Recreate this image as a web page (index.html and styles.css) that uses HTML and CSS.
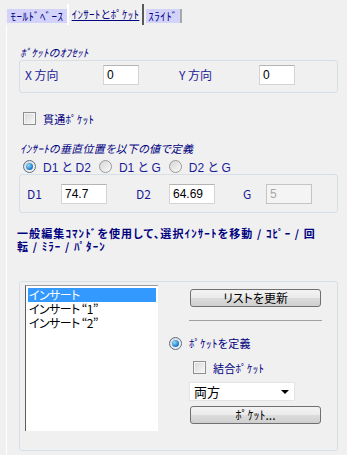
FILE: index.html
```html
<!DOCTYPE html>
<html lang="ja">
<head>
    <meta charset="UTF-8">
    <meta name="viewport" content="width=device-width, initial-scale=1.0">
    <title>インサートとポケット</title>
    <link rel="stylesheet" href="styles.css">
</head>
<body>
    <div class="tabs">
        <div class="tab tab-first">ﾓｰﾙﾄﾞﾍﾞｰｽ</div>
        <div class="tab tab-active">ｲﾝｻｰﾄとﾎﾟｹｯﾄ</div>
        <div class="tab tab-last">ｽﾗｲﾄﾞ</div>
    </div>

    <div class="panel">
        <div class="legend">ﾎﾟｹｯﾄのｵﾌｾｯﾄ</div>
        <div class="group offset-group">
            <span class="field-label offset-label">X 方向</span>
            <span class="textbox offset-box">0</span>
            <span class="field-label offset-label offset-y">Y 方向</span>
            <span class="textbox offset-box">0</span>
        </div>

        <div class="check-row through-row">
            <span class="checkbox"></span>
            <span class="check-text">貫通ﾎﾟｹｯﾄ</span>
        </div>

        <div class="legend legend-vertical">ｲﾝｻｰﾄの垂直位置を以下の値で定義</div>
        <div class="radio-row">
            <span class="radio checked"></span>
            <span class="radio-text">D1 と D2</span>
            <span class="radio"></span>
            <span class="radio-text">D1 と G</span>
            <span class="radio"></span>
            <span class="radio-text">D2 と G</span>
        </div>
        <div class="group dim-group">
            <span class="field-label dim-d1">D1</span>
            <span class="textbox dim-box">74.7</span>
            <span class="field-label dim-d2">D2</span>
            <span class="textbox dim-box">64.69</span>
            <span class="field-label dim-g">G</span>
            <span class="textbox dim-box disabled">5</span>
        </div>

        <div class="note">
            <div class="note-line">一般編集ｺﾏﾝﾄﾞを使用して、選択ｲﾝｻｰﾄを移動 / ｺﾋﾟｰ / 回</div>
            <div class="note-line">転 / ﾐﾗｰ / ﾊﾟﾀｰﾝ</div>
        </div>

        <div class="group list-group">
            <ul class="listbox">
                <li class="selected">インサート</li>
                <li>インサート “1”</li>
                <li>インサート “2”</li>
            </ul>
            <div class="side">
                <div class="button refresh">リストを更新</div>
                <div class="separator"></div>
                <div class="side-radio">
                    <span class="radio checked"></span>
                    <span class="radio-text small">ﾎﾟｹｯﾄを定義</span>
                </div>
                <div class="check-row join-row">
                    <span class="checkbox"></span>
                    <span class="check-text">結合ﾎﾟｹｯﾄ</span>
                </div>
                <div class="dropdown">
                    <span>両方</span>
                    <span class="arrow"></span>
                </div>
                <div class="button pocket">ﾎﾟｹｯﾄ...</div>
            </div>
        </div>
    </div>
</body>
</html>
```

FILE: styles.css
```css
body {
    margin: 0;
    width: 347px;
    height: 455px;
    overflow: hidden;
    background-color: #f0f0f0;
    font-family: "Noto Sans CJK JP", sans-serif;
    font-size: 11px;
    color: #000080;
    font-feature-settings: "palt";
}

/* tabs */
.tabs {
    display: flex;
    align-items: flex-start;
    height: 25px;
    padding-left: 7px;
}
.tab {
    height: 14px;
    line-height: 14px;
    margin-top: 9px;
    background-color: #d2d2fa;
    text-align: center;
    white-space: nowrap;
    letter-spacing: 0.5px;
}
.tab-first {
    width: 60px;
}
.tab-active {
    width: 73px;
    height: 21px;
    line-height: 20px;
    margin-top: 4px;
    background-color: #f0f0f0;
    border-left: 2px solid #ffffff;
    border-right: 2px solid #5a5a5a;
    text-decoration: underline;
    letter-spacing: 0.3px;
}
.tab-last {
    width: 34px;
    margin-left: 2px;
    border-right: 2px solid #a8a8a8;
}

/* panel */
.panel {
    margin-left: 6px;
    height: 430px;
    border-left: 1px solid #ffffff;
    padding: 20px 9px 0 12px;
}
.legend {
    height: 14px;
    line-height: 14px;
    margin: 0 0 1px 1px;
    font-style: italic;
    letter-spacing: 0.3px;
}
.group {
    border: 1px solid #d6dee6;
    border-radius: 3px;
}
.field-label {
    font-size: 12px;
    color: #1c1c96;
}
.textbox {
    box-sizing: border-box;
    height: 20px;
    line-height: 18px;
    padding-left: 3px;
    background-color: #ffffff;
    border: 1px solid #d4d4d4;
    border-top-color: #b4b4b4;
    font-family: "Liberation Sans", sans-serif;
    font-size: 12px;
    color: #000000;
}
.textbox.disabled {
    background-color: #f4f4f4;
    border-color: #c4c4c4;
    color: #a8a8a8;
}

.offset-group {
    display: flex;
    align-items: flex-start;
    height: 31px;
    padding-left: 5px;
}
.offset-group > * {
    margin-top: 4px;
}
.offset-label {
    width: 78px;
    line-height: 20px;
}
.offset-y {
    width: 80px;
    margin-left: 40px;
}
.offset-box {
    width: 36px;
}

/* checkbox and radio */
.check-row {
    display: flex;
    align-items: center;
    height: 13px;
}
.through-row {
    margin: 19px 0 0 4px;
}
.checkbox {
    box-sizing: border-box;
    width: 13px;
    height: 13px;
    border: 1px solid #8e8f8f;
    background: linear-gradient(135deg, #d8d8d8, #f8f8f8);
    box-shadow: inset 0 0 0 1px #f4f4f4;
}
.check-text {
    margin-left: 7px;
    letter-spacing: 0.3px;
}
.legend-vertical {
    margin-top: 16px;
}
.radio-row {
    display: flex;
    align-items: center;
    height: 14px;
    margin: 4px 0 1px 4px;
}
.radio {
    position: relative;
    box-sizing: border-box;
    width: 13px;
    height: 13px;
    border-radius: 50%;
    border: 1px solid #9a9a9a;
    background: linear-gradient(135deg, #d6d6d6, #fafafa);
}
.radio.checked {
    border-color: #5a6e86;
}
.radio.checked::after {
    content: "";
    position: absolute;
    left: 2px;
    top: 2px;
    width: 7px;
    height: 7px;
    border-radius: 50%;
    background: radial-gradient(circle at 35% 35%, #8fdcff, #1c74c4 70%, #15508e);
}
.radio-text {
    margin: 0 8px 0 7px;
    font-family: "Liberation Sans", "Noto Sans CJK JP", sans-serif;
    font-size: 12px;
    color: #1c1c96;
}
.radio-text.small {
    font-family: "Noto Sans CJK JP", sans-serif;
    font-size: 11px;
    color: #000080;
    letter-spacing: 0.3px;
}

.dim-group {
    display: flex;
    align-items: center;
    height: 37px;
    padding-left: 7px;
}
.dim-box {
    width: 46px;
}
.dim-d1 {
    width: 34px;
}
.dim-d2 {
    width: 33px;
    margin-left: 29px;
}
.dim-g {
    width: 23px;
    margin-left: 28px;
}

.note {
    margin: 14px 0 0 -2px;
    font-size: 11px;
    font-weight: bold;
    letter-spacing: 1.1px;
    white-space: nowrap;
}
.note-line {
    height: 13px;
    line-height: 13px;
}

/* list area */
.list-group {
    display: flex;
    align-items: flex-start;
    margin-top: 28px;
    height: 165px;
    padding: 3px 0 0 5px;
}
.listbox {
    box-sizing: border-box;
    width: 133px;
    height: 146px;
    margin: 0;
    padding: 2px 2px 0 2px;
    list-style: none;
    background-color: #ffffff;
    border-left: 1px solid #5e5e5e;
    border-top: 1px solid #9a9a9a;
    font-size: 12px;
    line-height: 14px;
    letter-spacing: -0.6px;
    color: #000000;
}
.listbox li {
    height: 14px;
    padding-left: 1px;
}
.listbox .selected {
    background-color: #3399ff;
    color: #ffffff;
}
.side {
    display: flex;
    flex-direction: column;
    margin-left: 11px;
    width: 154px;
}
.button {
    box-sizing: border-box;
    width: 131px;
    height: 18px;
    margin-left: 21px;
    border: 1px solid #707070;
    border-radius: 3px;
    background: linear-gradient(#f3f3f3 0%, #ebebeb 48%, #dcdcdc 52%, #cfcfcf 100%);
    text-align: center;
    line-height: 16px;
    font-size: 12px;
    color: #000000;
}
.refresh {
    margin-top: 4px;
}
.separator {
    width: 133px;
    height: 1px;
    margin: 13px 0 0 20px;
    background-color: #a0a0a0;
}
.side-radio {
    display: flex;
    align-items: center;
    height: 14px;
    margin-top: 15px;
}
.join-row {
    margin: 11px 0 0 24px;
}
.dropdown {
    box-sizing: border-box;
    display: flex;
    justify-content: space-between;
    align-items: center;
    width: 106px;
    height: 19px;
    margin: 8px 0 0 20px;
    padding: 0 5px 0 4px;
    background-color: #ffffff;
    border: 1px solid #e4e4e4;
    font-size: 13px;
    color: #000000;
}
.arrow {
    width: 0;
    height: 0;
    border-left: 4px solid transparent;
    border-right: 4px solid transparent;
    border-top: 4px solid #000000;
}
.pocket {
    margin-top: 5px;
}
```
